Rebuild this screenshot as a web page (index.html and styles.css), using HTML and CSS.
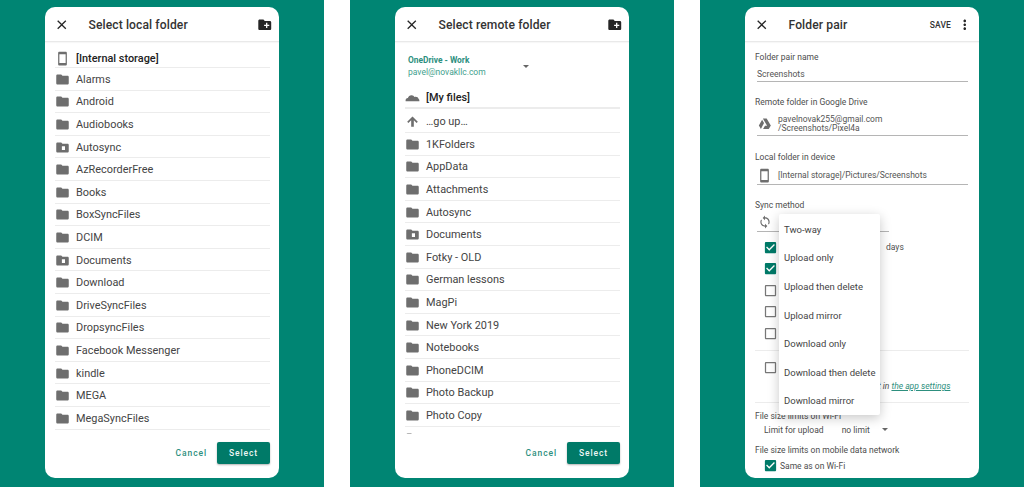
FILE: index.html
```html
<!DOCTYPE html>
<html lang="en">
<head>
  <meta charset="UTF-8">
  <meta name="viewport" content="width=device-width, initial-scale=1">
  <title>Folder pair screens</title>
  <link rel="stylesheet" href="styles.css">
</head>
<body>

  <!-- Shared icons -->
  <svg class="defs" aria-hidden="true">
    <symbol id="i-close" viewBox="0 0 24 24"><path d="M19 6.41L17.59 5 12 10.59 6.41 5 5 6.41 10.59 12 5 17.59 6.41 19 12 13.41 17.59 19 19 17.59 13.41 12z"/></symbol>
    <symbol id="i-newfolder" viewBox="0 0 24 24"><path d="M20 6h-8l-2-2H4c-1.11 0-1.99.89-1.99 2L2 18c0 1.11.89 2 2 2h16c1.11 0 2-.89 2-2V8c0-1.11-.89-2-2-2zm-1 8h-3v3h-2v-3h-3v-2h3V9h2v3h3v2z"/></symbol>
    <symbol id="i-folder" viewBox="0 0 24 24"><path d="M10 4H4c-1.1 0-1.99.9-1.99 2L2 18c0 1.1.9 2 2 2h16c1.1 0 2-.9 2-2V8c0-1.1-.9-2-2-2h-8l-2-2z"/></symbol>
    <symbol id="i-synced" viewBox="0 0 24 24"><path fill-rule="evenodd" d="M10 4H4c-1.1 0-1.99.9-1.99 2L2 18c0 1.1.9 2 2 2h16c1.1 0 2-.9 2-2V8c0-1.1-.9-2-2-2h-8l-2-2zM11 10h5v6h-5z"/></symbol>
    <symbol id="i-phone" viewBox="0 0 24 24"><path d="M17 1.01L7 1c-1.1 0-2 .9-2 2v18c0 1.1.9 2 2 2h10c1.1 0 2-.9 2-2V3c0-1.1-.9-1.99-2-1.99zM17 19H7V5h10v14z"/></symbol>
    <symbol id="i-up" viewBox="0 0 24 24"><path d="M3.500 12.500l1.900 1.900L9.900 10V20.500h4.200V10l4.500 4.400 1.900-1.900L12 4z"/></symbol>
    <symbol id="i-cloud" viewBox="0 0 24 24"><path d="M1 18c-.6-2.600 1-5 3.600-5.200C5.400 9.800 8 8 10.800 8.300c2 .2 3.600 1.300 4.500 2.900 2.900-.9 5.800.5 6.500 3 .9.500 1.400 1.800 1.200 3.800z"/></symbol>
    <symbol id="i-sync" viewBox="0 0 24 24"><path d="M12 4V1L8 5l4 4V6c3.31 0 6 2.69 6 6 0 1.010-.25 1.970-.7 2.800l1.460 1.460C19.540 15.030 20 13.570 20 12c0-4.420-3.580-8-8-8zm0 14c-3.310 0-6-2.690-6-6 0-1.010.25-1.970.7-2.800L5.240 7.740C4.460 8.970 4 10.430 4 12c0 4.420 3.580 8 8 8v3l4-4-4-4v3z"/></symbol>
    <symbol id="i-more" viewBox="0 0 24 24"><path d="M12 8c1.100 0 2-.9 2-2s-.9-2-2-2-2 .9-2 2 .9 2 2 2zm0 2c-1.100 0-2 .9-2 2s.9 2 2 2 2-.9 2-2-.9-2-2-2zm0 6c-1.100 0-2 .9-2 2s.9 2 2 2 2-.9 2-2-.9-2-2-2z"/></symbol>
    <symbol id="i-drive" viewBox="0 0 24 24"><path d="M8.600 2.500h6.800l7.600 13h-6.800zM7.300 4.800l3.400 5.900L5.200 21.500 1.500 15.200zM9 21.500l3.400-6h10.200l-3.500 6z"/></symbol>
    <symbol id="i-checked" viewBox="0 0 24 24"><path d="M19 3H5c-1.110 0-2 .9-2 2v14c0 1.100.89 2 2 2h14c1.110 0 2-.9 2-2V5c0-1.100-.89-2-2-2zm-9 14l-5-5 1.410-1.410L10 14.170l7.590-7.590L19 8l-9 9z"/></symbol>
    <symbol id="i-unchecked" viewBox="0 0 24 24"><path d="M19 5v14H5V5h14m0-2H5c-1.100 0-2 .9-2 2v14c0 1.100.9 2 2 2h14c1.100 0 2-.9 2-2V5c0-1.100-.9-2-2-2z"/></symbol>
  </svg>

  <div class="screens">

    <!-- Local folder picker -->
    <section class="panel">
      <div class="card">
        <div class="header">
          <svg class="hicon"><use href="#i-close"/></svg>
          <h2 class="title">Select local folder</h2>
          <svg class="hicon new"><use href="#i-newfolder"/></svg>
        </div>
        <ul class="list local">
          <li class="row root"><svg class="ricon"><use href="#i-phone"/></svg>[Internal storage]</li>
          <li class="row"><svg class="ricon"><use href="#i-folder"/></svg>Alarms</li>
          <li class="row"><svg class="ricon"><use href="#i-folder"/></svg>Android</li>
          <li class="row"><svg class="ricon"><use href="#i-folder"/></svg>Audiobooks</li>
          <li class="row"><svg class="ricon"><use href="#i-synced"/></svg>Autosync</li>
          <li class="row"><svg class="ricon"><use href="#i-folder"/></svg>AzRecorderFree</li>
          <li class="row"><svg class="ricon"><use href="#i-folder"/></svg>Books</li>
          <li class="row"><svg class="ricon"><use href="#i-folder"/></svg>BoxSyncFiles</li>
          <li class="row"><svg class="ricon"><use href="#i-folder"/></svg>DCIM</li>
          <li class="row"><svg class="ricon"><use href="#i-synced"/></svg>Documents</li>
          <li class="row"><svg class="ricon"><use href="#i-folder"/></svg>Download</li>
          <li class="row"><svg class="ricon"><use href="#i-folder"/></svg>DriveSyncFiles</li>
          <li class="row"><svg class="ricon"><use href="#i-folder"/></svg>DropsyncFiles</li>
          <li class="row"><svg class="ricon"><use href="#i-folder"/></svg>Facebook Messenger</li>
          <li class="row"><svg class="ricon"><use href="#i-folder"/></svg>kindle</li>
          <li class="row"><svg class="ricon"><use href="#i-folder"/></svg>MEGA</li>
          <li class="row"><svg class="ricon"><use href="#i-folder"/></svg>MegaSyncFiles</li>
        </ul>
        <div class="footer">
          <span class="cancel">Cancel</span>
          <span class="select">Select</span>
        </div>
      </div>
    </section>

    <!-- Remote folder picker -->
    <section class="panel">
      <div class="card">
        <div class="header">
          <svg class="hicon"><use href="#i-close"/></svg>
          <h2 class="title">Select remote folder</h2>
          <svg class="hicon new"><use href="#i-newfolder"/></svg>
        </div>
        <div class="account">
          <div class="acc-text">
            <div class="acc-name">OneDrive - Work</div>
            <div class="acc-mail">pavel@novakllc.com</div>
          </div>
          <span class="caret"></span>
        </div>
        <ul class="list remote">
          <li class="row root tall"><svg class="ricon"><use href="#i-cloud"/></svg>[My files]</li>
          <li class="row up"><svg class="ricon"><use href="#i-up"/></svg>…go up…</li>
          <li class="row"><svg class="ricon"><use href="#i-folder"/></svg>1KFolders</li>
          <li class="row"><svg class="ricon"><use href="#i-folder"/></svg>AppData</li>
          <li class="row"><svg class="ricon"><use href="#i-folder"/></svg>Attachments</li>
          <li class="row"><svg class="ricon"><use href="#i-folder"/></svg>Autosync</li>
          <li class="row"><svg class="ricon"><use href="#i-synced"/></svg>Documents</li>
          <li class="row"><svg class="ricon"><use href="#i-folder"/></svg>Fotky - OLD</li>
          <li class="row"><svg class="ricon"><use href="#i-folder"/></svg>German lessons</li>
          <li class="row"><svg class="ricon"><use href="#i-folder"/></svg>MagPi</li>
          <li class="row"><svg class="ricon"><use href="#i-folder"/></svg>New York 2019</li>
          <li class="row"><svg class="ricon"><use href="#i-folder"/></svg>Notebooks</li>
          <li class="row"><svg class="ricon"><use href="#i-folder"/></svg>PhoneDCIM</li>
          <li class="row"><svg class="ricon"><use href="#i-folder"/></svg>Photo Backup</li>
          <li class="row"><svg class="ricon"><use href="#i-folder"/></svg>Photo Copy</li>
          <li class="row"><svg class="ricon"><use href="#i-folder"/></svg></li>
        </ul>
        <div class="footer">
          <span class="cancel">Cancel</span>
          <span class="select">Select</span>
        </div>
      </div>
    </section>

    <!-- Folder pair form -->
    <section class="panel">
      <div class="card">
        <div class="header">
          <svg class="hicon"><use href="#i-close"/></svg>
          <h2 class="title">Folder pair</h2>
          <span class="save">SAVE</span>
          <svg class="hicon more"><use href="#i-more"/></svg>
        </div>
        <div class="form">
          <div class="label first">Folder pair name</div>
          <div class="field name">Screenshots</div>

          <div class="label gap-drive">Remote folder in Google Drive</div>
          <div class="field drive">
            <svg class="ficon logo"><use href="#i-drive"/></svg>
            <div>pavelnovak255@gmail.com<br>/Screenshots/Pixel4a</div>
          </div>

          <div class="label gap-local">Local folder in device</div>
          <div class="field local-path">
            <svg class="ficon"><use href="#i-phone"/></svg>
            <div>[Internal storage]/Pictures/Screenshots</div>
          </div>

          <div class="label gap-sync">Sync method</div>
          <div class="field sync">
            <svg class="ficon small"><use href="#i-sync"/></svg>
          </div>

          <div class="check first-check"><svg class="cbox on"><use href="#i-checked"/></svg><span class="days">days</span></div>
          <div class="check"><svg class="cbox on"><use href="#i-checked"/></svg></div>
          <div class="check"><svg class="cbox"><use href="#i-unchecked"/></svg></div>
          <div class="check"><svg class="cbox"><use href="#i-unchecked"/></svg></div>
          <div class="check"><svg class="cbox"><use href="#i-unchecked"/></svg></div>

          <div class="divider"></div>

          <div class="check notice"><svg class="cbox"><use href="#i-unchecked"/></svg></div>
          <div class="hint"><em>t in <a href="#">the app settings</a></em></div>

          <div class="divider second"></div>

          <div class="label gap-wifi">File size limits on Wi-Fi</div>
          <div class="limit"><span>Limit for upload</span><span class="limit-val">no limit</span><span class="caret"></span></div>

          <div class="label gap-mobile">File size limits on mobile data network</div>
          <div class="check same"><svg class="cbox on"><use href="#i-checked"/></svg><span>Same as on Wi-Fi</span></div>
        </div>

        <!-- Open dropdown over the form -->
        <ul class="menu">
          <li>Two-way</li>
          <li>Upload only</li>
          <li>Upload then delete</li>
          <li>Upload mirror</li>
          <li>Download only</li>
          <li>Download then delete</li>
          <li>Download mirror</li>
        </ul>
      </div>
    </section>

  </div>

</body>
</html>
```

FILE: styles.css
```css
* {
  box-sizing: border-box;
}

html, body {
  height: 100%;
}

body {
  margin: 0;
  background: #fff;
  font-family: Roboto, "Liberation Sans", sans-serif;
  color: #3c3c3c;
  overflow: hidden;
}

.defs {
  position: absolute;
  width: 0;
  height: 0;
}

.screens {
  display: flex;
  gap: 26px;
  height: 487px;
}

.panel {
  flex: 0 0 324px;
  padding: 7px 45px 9px;
  background: #008573;
}

.card {
  position: relative;
  display: flex;
  flex-direction: column;
  height: 471px;
  background: #fff;
  border-radius: 10px;
  overflow: hidden;
}

/* Header */
.header {
  display: flex;
  align-items: center;
  flex: 0 0 35px;
  padding: 1px 6.5px 0 9px;
  border-bottom: 1px solid #e9e9e9;
  box-shadow: 0 1px 1px rgba(0, 0, 0, 0.03);
}

.hicon {
  flex: none;
  width: 15.5px;
  height: 15.5px;
  fill: #262626;
}

.hicon.new {
  margin-left: auto;
}

.title {
  margin: 0 0 0 19px;
  font-size: 12.1px;
  font-weight: 500;
  letter-spacing: 0.1px;
  color: #333;
}

.save {
  margin-left: auto;
  font-size: 8.5px;
  font-weight: 500;
  letter-spacing: 0.1px;
  color: #333;
}

.hicon.more {
  margin-left: 6px;
}

/* Folder lists */
.list {
  flex: 1;
  min-height: 0;
  margin: 0;
  padding: 4px 9px 0 10px;
  list-style: none;
  overflow: hidden;
}

.row {
  display: flex;
  align-items: center;
  height: 22.6px;
  padding-top: 1px;
  border-bottom: 1px solid #ececec;
  font-size: 10.9px;
  color: #444;
}

.row.root {
  height: 22px;
  padding-top: 3px;
  font-weight: 500;
  color: #222;
}

.remote {
  padding-top: 0;
}

.row.tall {
  height: 24px;
  padding-top: 2px;
  border-bottom-width: 2px;
}

.row.up {
  height: 24px;
  padding-top: 2px;
}

.ricon {
  flex: none;
  width: 15px;
  height: 15px;
  margin-right: 6px;
  fill: #6e6e6e;
}

/* Account picker */
.account {
  display: flex;
  align-items: center;
  flex: none;
  height: 43px;
  padding: 5px 0 0 13px;
}

.acc-text {
  width: 115px;
}

.acc-name {
  font-size: 8.4px;
  font-weight: 700;
  line-height: 12px;
  color: #2d8f7e;
}

.acc-mail {
  font-size: 8.5px;
  line-height: 12px;
  color: #3f9f8e;
}

.caret {
  display: inline-block;
  width: 0;
  height: 0;
  border-left: 3px solid transparent;
  border-right: 3px solid transparent;
  border-top: 3px solid #666;
}

/* Dialog buttons */
.footer {
  display: flex;
  align-items: center;
  justify-content: flex-end;
  flex: none;
  height: 44px;
  padding: 0 9px 6px 0;
}

.cancel {
  margin-right: 10px;
  font-size: 8.5px;
  font-weight: 500;
  letter-spacing: 0.9px;
  color: #2d8f7e;
}

.select {
  display: flex;
  align-items: center;
  justify-content: center;
  width: 53px;
  height: 22px;
  background: #007a68;
  border-radius: 2px;
  box-shadow: 0 1px 2px rgba(0, 0, 0, 0.3);
  font-size: 8.5px;
  font-weight: 500;
  letter-spacing: 0.9px;
  color: #eef6f4;
}

/* Form */
.form {
  flex: 1;
  padding: 0 10px;
  font-size: 8.5px;
  color: #4d4d4d;
}

.label {
  height: 12px;
  line-height: 12px;
  white-space: nowrap;
}

.label.first {
  margin-top: 9px;
}

.label.gap-drive {
  margin-top: 14px;
}

.label.gap-local {
  margin-top: 15px;
}

.label.gap-sync {
  margin-top: 14px;
}

.label.gap-wifi {
  margin-top: 6.6px;
}

.label.gap-mobile {
  margin-top: 6.4px;
}

.field {
  display: flex;
  align-items: center;
  margin: 0 1px 0 2px;
  border-bottom: 1px solid #b5b5b5;
  color: #555;
}

.field.name {
  height: 19px;
  padding-top: 3px;
  font-size: 8.6px;
}

.field.drive {
  height: 28px;
  padding-top: 4px;
  line-height: 9px;
}

.field.local-path {
  height: 20px;
  margin-top: 2px;
  padding-top: 1px;
}

.field.sync {
  height: 21px;
  padding: 1px 0 0 1px;
  margin-right: 80px;
}

.ficon {
  flex: none;
  width: 15px;
  height: 15px;
  margin-right: 6px;
  fill: #6e6e6e;
}

.ficon.logo {
  width: 13.5px;
  height: 13.5px;
  margin: 0 6.75px 0 0.75px;
}

.ficon.small {
  width: 14px;
  height: 14px;
}

.check {
  display: flex;
  align-items: center;
  height: 21.5px;
  padding-left: 8px;
}

.check.first-check {
  margin-top: 4.5px;
}

.cbox {
  flex: none;
  width: 15px;
  height: 15px;
  fill: #777;
}

.cbox.on {
  fill: #007a68;
}

.days {
  margin-left: 108px;
}

.divider {
  height: 1px;
  margin-top: 6px;
  background: #ececec;
}

.check.notice {
  height: 21px;
  margin-top: 5.5px;
}

.hint {
  height: 12px;
  padding-left: 123px;
  margin-top: 2.5px;
  line-height: 12px;
  white-space: nowrap;
}

.hint a {
  color: #2d8f7e;
}

.divider.second {
  margin-top: 10px;
}

.limit {
  display: flex;
  align-items: center;
  height: 16px;
  padding-left: 9px;
}

.limit-val {
  margin-left: 18px;
  margin-right: 12px;
}

.check.same {
  height: 16px;
  margin-top: 1.6px;
}

.check.same span {
  margin-left: 2px;
}

/* Dropdown */
.menu {
  position: absolute;
  top: 207px;
  left: 34px;
  width: 101px;
  height: 201px;
  margin: 0;
  padding: 1px 0 0;
  list-style: none;
  background: #fff;
  border-radius: 2px;
  box-shadow: 0 3px 12px rgba(0, 0, 0, 0.22);
}

.menu li {
  display: flex;
  align-items: center;
  height: 28.6px;
  padding-left: 5px;
  font-size: 9.5px;
  color: #444;
  white-space: nowrap;
}
```
